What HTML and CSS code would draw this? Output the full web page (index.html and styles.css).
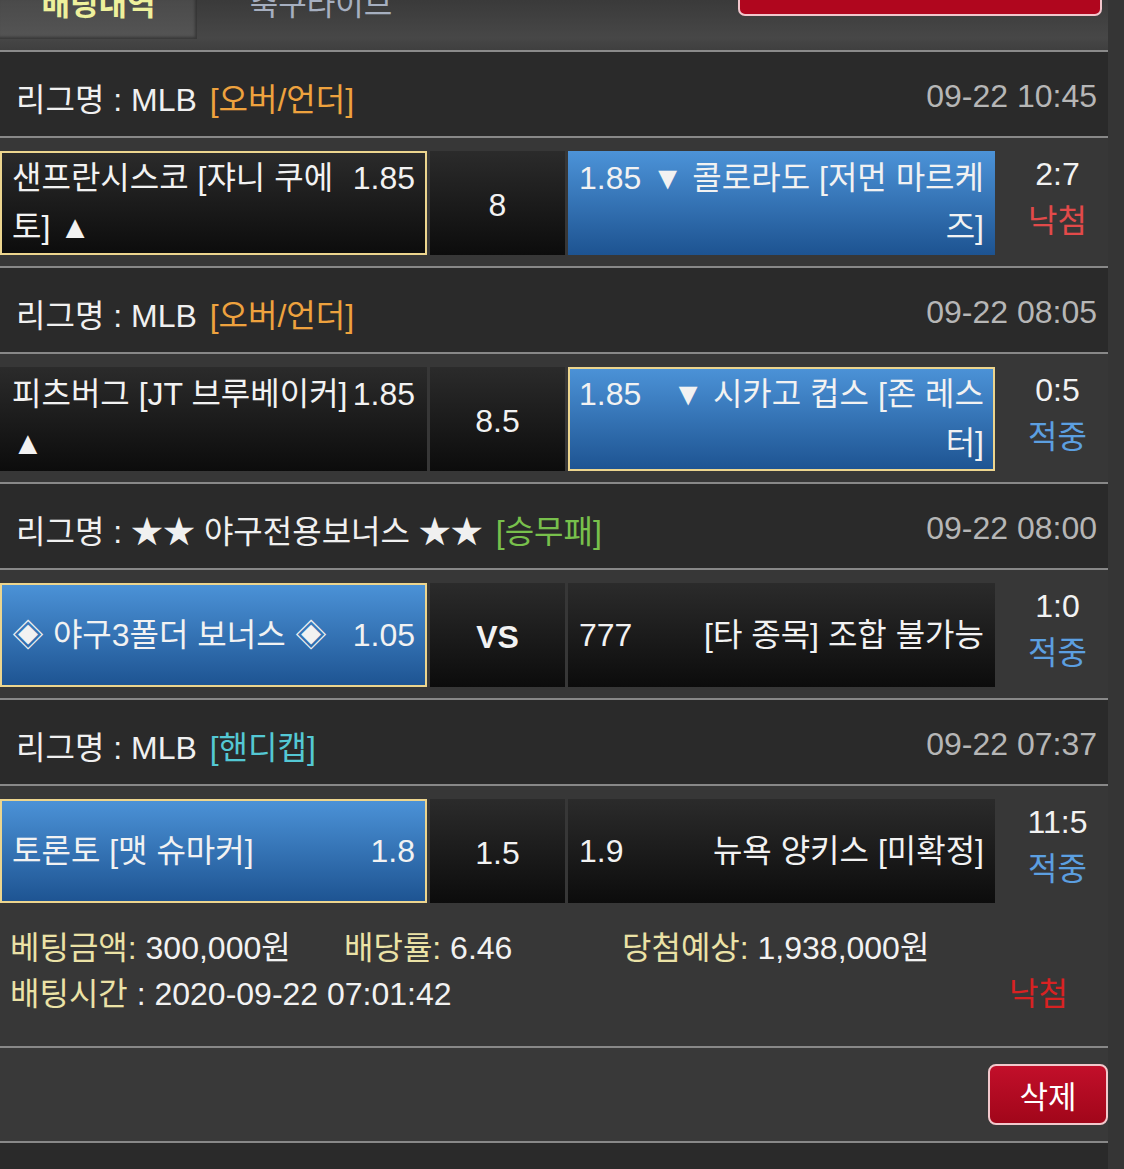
FILE: index.html
```html
<!DOCTYPE html>
<html lang="ko">
<head>
<meta charset="utf-8">
<title>배팅내역</title>
<link rel="stylesheet" href="styles.css">
</head>
<body>
<div class="page">
  <div class="topbar">
    <div class="tab active"><span>배팅내역</span></div>
    <div class="tab"><span>축구라이브</span></div>
    <div class="topbtn"></div>
  </div>

  <div class="block">
    <div class="league">
      <div class="lname">리그명 : MLB <span class="tag ou">[오버/언더]</span></div>
      <div class="ldate">09-22 10:45</div>
    </div>
    <div class="game">
      <div class="cell home sel"><div class="inner"><span class="odd">1.85</span>샌프란시스코 [쟈니 쿠에<br>토] ▲</div></div>
      <div class="cell mid">8</div>
      <div class="cell away blue"><div class="inner"><span class="odd">1.85</span>▼ 콜로라도 [저먼 마르케<br>즈]</div></div>
      <div class="result"><div>2:7</div><div class="lose">낙첨</div></div>
    </div>
  </div>

  <div class="block">
    <div class="league">
      <div class="lname">리그명 : MLB <span class="tag ou">[오버/언더]</span></div>
      <div class="ldate">09-22 08:05</div>
    </div>
    <div class="game">
      <div class="cell home"><div class="inner"><span class="odd">1.85</span>피츠버그 [JT 브루베이커]<br>▲</div></div>
      <div class="cell mid">8.5</div>
      <div class="cell away blue sel"><div class="inner"><span class="odd">1.85</span>▼ 시카고 컵스 [존 레스<br>터]</div></div>
      <div class="result"><div>0:5</div><div class="win">적중</div></div>
    </div>
  </div>

  <div class="block">
    <div class="league">
      <div class="lname">리그명 : ★★ 야구전용보너스 ★★ <span class="tag wdl">[승무패]</span></div>
      <div class="ldate">09-22 08:00</div>
    </div>
    <div class="game">
      <div class="cell home blue sel"><div class="inner"><span class="odd">1.05</span>◈ 야구3폴더 보너스 ◈</div></div>
      <div class="cell mid vs">VS</div>
      <div class="cell away"><div class="inner"><span class="odd">777</span>[타 종목] 조합 불가능</div></div>
      <div class="result"><div>1:0</div><div class="win">적중</div></div>
    </div>
  </div>

  <div class="block">
    <div class="league">
      <div class="lname">리그명 : MLB <span class="tag hc">[핸디캡]</span></div>
      <div class="ldate">09-22 07:37</div>
    </div>
    <div class="game last">
      <div class="cell home blue sel"><div class="inner"><span class="odd">1.8</span>토론토 [맷 슈마커]</div></div>
      <div class="cell mid">1.5</div>
      <div class="cell away"><div class="inner"><span class="odd">1.9</span>뉴욕 양키스 [미확정]</div></div>
      <div class="result"><div>11:5</div><div class="win">적중</div></div>
    </div>
  </div>

  <div class="summary">
    <div class="srow1">
      <div><span class="lbl">베팅금액:</span> 300,000원</div>
      <div><span class="lbl">배당률:</span> 6.46</div>
      <div><span class="lbl">당첨예상:</span> 1,938,000원</div>
    </div>
    <div class="srow2">
      <div><span class="lbl">배팅시간</span> : 2020-09-22 07:01:42</div>
      <div class="slose">낙첨</div>
    </div>
  </div>

  <div class="actions">
    <button class="del">삭제</button>
  </div>

  <div class="nextleague"></div>
</div>
</body>
</html>
```

FILE: styles.css
```css
* { box-sizing: border-box; }
html, body { margin: 0; padding: 0; }
body {
  background: #353535;
  font-family: "Liberation Sans", "Noto Sans CJK KR", sans-serif;
  font-size: 32px;
  color: #f2f2f2;
  width: 1124px;
  height: 1169px;
  overflow: hidden;
}
.page { width: 1108px; }

/* top tab bar */
.topbar {
  height: 52px;
  display: flex;
  align-items: flex-start;
  background: linear-gradient(#3a3a3a, #474747 75%, #3f3f3f);
  border-bottom: 2px solid #8a8a8a;
}
.tab {
  height: 39px;
  overflow: hidden;
  text-align: center;
}
.tab span {
  display: block;
  margin-top: -10px;
  line-height: 30px;
}
.tab.active {
  width: 197px;
  background: linear-gradient(#4a4a4a, #555555);
  box-shadow: inset -2px -2px 3px rgba(0,0,0,0.35);
  color: #eef09c;
  font-weight: bold;
  font-size: 31px;
}
.tab:not(.active) {
  width: 248px;
  color: #a6afc0;
  font-size: 31px;
}
.topbtn {
  margin-left: auto;
  margin-right: 6px;
  margin-top: -14px;
  width: 364px;
  height: 30px;
  background: #b0061e;
  border: 2px solid #f2c6cc;
  border-radius: 7px;
}

/* league block */
.league {
  height: 86px;
  background: #2a2a2a;
  display: flex;
  align-items: center;
  justify-content: space-between;
  padding: 5px 11px 0 16px;
  border-bottom: 2px solid #888888;
}
.lname { color: #f0f0f0; }
.tag { margin-left: 4px; }
.ou { color: #eea23e; }
.wdl { color: #78c04c; }
.hc { color: #54c8d4; }
.ldate { color: #b6b6b6; }

.game {
  display: flex;
  padding: 13px 0 11px;
  background: #373737;
  border-bottom: 2px solid #888888;
}
.game.last {
  padding-bottom: 0;
  border-bottom: none;
}
.cell {
  height: 104px;
  border: 2px solid transparent;
  background-origin: border-box;
  background-image: linear-gradient(#2b2b2b, #0c0c0c);
  display: flex;
  align-items: center;
  line-height: 49px;
}
.cell.blue { background-image: linear-gradient(#4c93d8, #1d5391); }
.cell.sel { border-color: #ecd58e; }
.home { width: 427px; padding: 0 10px; margin-right: 3px; }
.away { width: 427px; padding: 0 9px; text-align: right; }
.mid { width: 135px; margin-right: 3px; justify-content: center; padding-top: 4px; }
.mid.vs { font-weight: bold; }
.inner { width: 100%; white-space: nowrap; }
.home .odd { float: right; }
.away .odd { float: left; }

.result {
  flex: 1;
  height: 104px;
  display: flex;
  flex-direction: column;
  justify-content: center;
  align-items: center;
  line-height: 47px;
  padding-bottom: 10px;
  padding-left: 12px;
}
.lose { color: #e24a4a; }
.win { color: #5c9fe0; }

/* summary */
.summary {
  padding: 22px 10px 29px;
  background: #373737;
  line-height: 46px;
}
.srow1 {
  display: grid;
  grid-template-columns: 334px 278px auto;
}
.srow2 {
  display: flex;
  justify-content: space-between;
  padding-right: 30px;
}
.lbl { color: #ebe2a6; }
.slose { color: #d82222; }

.actions {
  border-top: 2px solid #888888;
  border-bottom: 2px solid #888888;
  height: 97px;
  background: #393939;
  display: flex;
  justify-content: flex-end;
  align-items: center;
}
.del {
  width: 120px;
  height: 61px;
  background: linear-gradient(#c20f2a, #a1061a);
  border: 2px solid #f2c8cc;
  border-radius: 8px;
  color: #ffffff;
  font-family: "Liberation Sans", "Noto Sans CJK KR", sans-serif;
  font-size: 31px;
  padding: 0;
}
.nextleague {
  height: 40px;
  background: #2a2a2a;
}
```
